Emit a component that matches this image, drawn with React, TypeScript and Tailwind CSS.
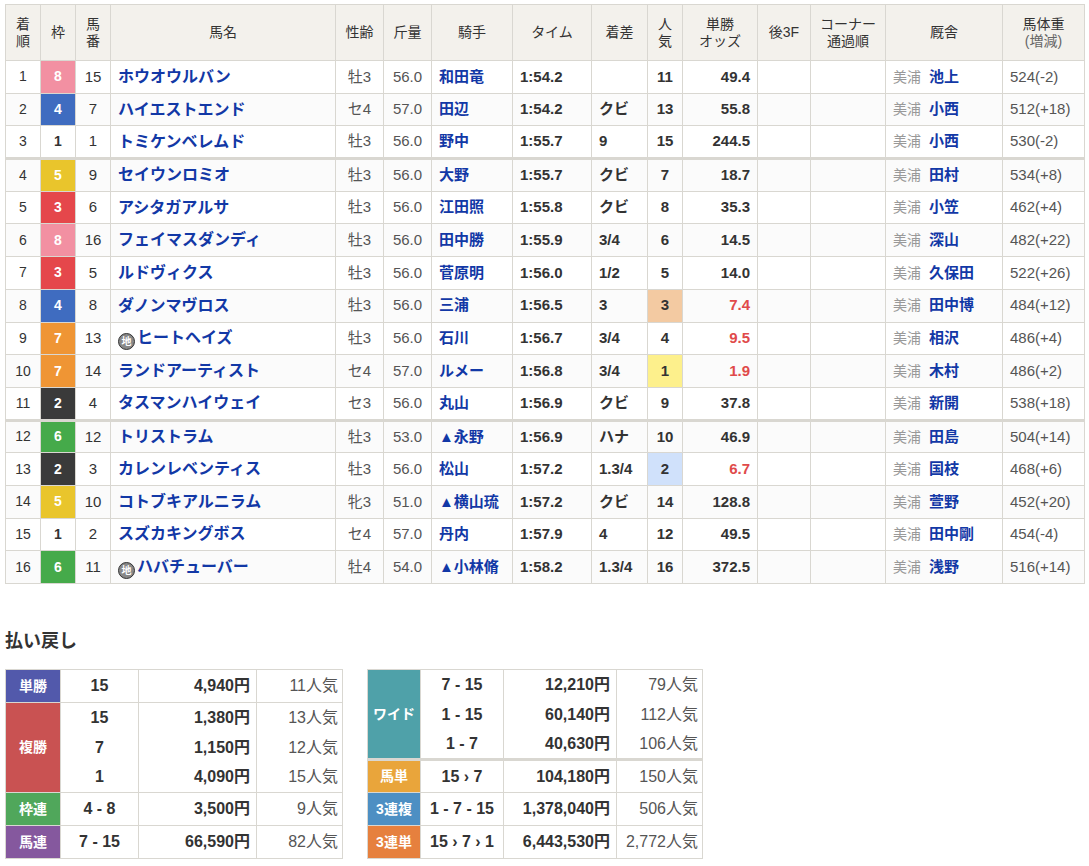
import React from "react";

const F = { fontFamily: '"Liberation Sans","Noto Sans CJK JP",sans-serif' };
const waku: Record<number, string> = {
  1: "bg-white text-[#333]",
  2: "bg-[#3a3a3a] text-white",
  3: "bg-[#e5474b] text-white",
  4: "bg-[#3f6cc0] text-white",
  5: "bg-[#e9c52c] text-white",
  6: "bg-[#45aa4a] text-white",
  7: "bg-[#ef9534] text-white",
  8: "bg-[#f290a2] text-white",
};
type R = [number, number, number, string, boolean, string, string, string, string, string, number, string, string, string];
const rows: R[] = [
  [1, 8, 15, "ホウオウルバン", false, "牡3", "56.0", "和田竜", "1:54.2", "", 11, "49.4", "池上", "524(-2)"],
  [2, 4, 7, "ハイエストエンド", false, "セ4", "57.0", "田辺", "1:54.2", "クビ", 13, "55.8", "小西", "512(+18)"],
  [3, 1, 1, "トミケンベレムド", false, "牡3", "56.0", "野中", "1:55.7", "9", 15, "244.5", "小西", "530(-2)"],
  [4, 5, 9, "セイウンロミオ", false, "牡3", "56.0", "大野", "1:55.7", "クビ", 7, "18.7", "田村", "534(+8)"],
  [5, 3, 6, "アシタガアルサ", false, "牡3", "56.0", "江田照", "1:55.8", "クビ", 8, "35.3", "小笠", "462(+4)"],
  [6, 8, 16, "フェイマスダンディ", false, "牡3", "56.0", "田中勝", "1:55.9", "3/4", 6, "14.5", "深山", "482(+22)"],
  [7, 3, 5, "ルドヴィクス", false, "牡3", "56.0", "菅原明", "1:56.0", "1/2", 5, "14.0", "久保田", "522(+26)"],
  [8, 4, 8, "ダノンマヴロス", false, "牡3", "56.0", "三浦", "1:56.5", "3", 3, "7.4", "田中博", "484(+12)"],
  [9, 7, 13, "ヒートヘイズ", true, "牡3", "56.0", "石川", "1:56.7", "3/4", 4, "9.5", "相沢", "486(+4)"],
  [10, 7, 14, "ランドアーティスト", false, "セ4", "57.0", "ルメー", "1:56.8", "3/4", 1, "1.9", "木村", "486(+2)"],
  [11, 2, 4, "タスマンハイウェイ", false, "セ3", "56.0", "丸山", "1:56.9", "クビ", 9, "37.8", "新開", "538(+18)"],
  [12, 6, 12, "トリストラム", false, "牡3", "53.0", "▲永野", "1:56.9", "ハナ", 10, "46.9", "田島", "504(+14)"],
  [13, 2, 3, "カレンレベンティス", false, "牡3", "56.0", "松山", "1:57.2", "1.3/4", 2, "6.7", "国枝", "468(+6)"],
  [14, 5, 10, "コトブキアルニラム", false, "牝3", "51.0", "▲横山琉", "1:57.2", "クビ", 14, "128.8", "萱野", "452(+20)"],
  [15, 1, 2, "スズカキングボス", false, "セ4", "57.0", "丹内", "1:57.9", "4", 12, "49.5", "田中剛", "454(-4)"],
  [16, 6, 11, "ハバチューバー", true, "牡4", "54.0", "▲小林脩", "1:58.2", "1.3/4", 16, "372.5", "浅野", "516(+14)"],
];
const popBg: Record<number, string> = { 1: "bg-[#fdf08c]", 2: "bg-[#d0e1fb]", 3: "bg-[#f3caa2]" };
const widths = [35, 35, 35, 225, 48, 48, 81, 79, 56, 35, 75, 53, 75, 117, 82];
const B = "border border-[#d9d7d1]";

function Chi() {
  return (
    <span className="inline-flex items-center justify-center w-[17px] h-[17px] rounded-full bg-[#888] border-[1.5px] border-[#333] text-white text-[10px] font-bold mr-[2px] align-[-2px]">地</span>
  );
}

export default function App() {
  const th = `${B} bg-[#f3f1ec] font-normal text-[#333] text-[14px] leading-[17px]`;
  return (
    <div style={F} className="bg-white w-[1089px] h-[866px] text-[#333] text-[15px] pt-[4px] pl-[5px]">
      <table className="border-collapse table-fixed" style={{ width: 1079 }}>
        <colgroup>{widths.map((w, i) => <col key={i} style={{ width: w }} />)}</colgroup>
        <thead>
          <tr className="h-[56px]">
            <th className={th}>着<br />順</th>
            <th className={th}>枠</th>
            <th className={th}>馬<br />番</th>
            <th className={th}>馬名</th>
            <th className={th}>性齢</th>
            <th className={th}>斤量</th>
            <th className={th}>騎手</th>
            <th className={th}>タイム</th>
            <th className={th}>着差</th>
            <th className={th}>人<br />気</th>
            <th className={th}>単勝<br />オッズ</th>
            <th className={th}>後3F</th>
            <th className={th}>コーナー<br />通過順</th>
            <th className={th}>厩舎</th>
            <th className={th}>馬体重<br /><span className="text-[#666]">(増減)</span></th>
          </tr>
        </thead>
        <tbody>
          {rows.map((r) => {
            const thick = r[0] === 4 || r[0] === 12 ? "border-t-[3px]" : "";
            const td = `${B} ${thick}`;
            return (
              <tr key={r[0]} className={`h-[32.7px] ${r[0] % 2 === 0 ? "bg-[#fbfbfb]" : "bg-white"}`}>
                <td className={`${td} text-center text-[14px]`}>{r[0]}</td>
                <td className={`${td} text-center font-bold text-[14px] ${waku[r[1]]}`}>{r[1]}</td>
                <td className={`${td} text-center`}>{r[2]}</td>
                <td className={`${td} px-[7px] font-bold text-[#1238a6] text-[16px]`}>{r[4] && <Chi />}{r[3]}</td>
                <td className={`${td} text-center text-[#555]`}>{r[5]}</td>
                <td className={`${td} text-center text-[#555]`}>{r[6]}</td>
                <td className={`${td} px-[7px] font-bold text-[#1238a6]`}>{r[7]}</td>
                <td className={`${td} px-[7px] font-bold`}>{r[8]}</td>
                <td className={`${td} px-[7px] font-bold`}>{r[9]}</td>
                <td className={`${td} text-center font-bold ${popBg[r[10]] ?? ""}`}>{r[10]}</td>
                <td className={`${td} text-right pr-[7px] font-bold ${parseFloat(r[11]) < 10 ? "text-[#e04a4a]" : ""}`}>{r[11]}</td>
                <td className={td}></td>
                <td className={td}></td>
                <td className={`${td} px-[7px]`}><span className="text-[#999] mr-[8px] text-[14px]">美浦</span><span className="font-bold text-[#1238a6]">{r[12]}</span></td>
                <td className={`${td} px-[7px] text-[#555]`}>{r[13]}</td>
              </tr>
            );
          })}
        </tbody>
      </table>

      <div className="mt-[44px] text-[18px] font-bold text-[#333]">払い戻し</div>

      <div className="flex gap-[24px] mt-[14px] items-start">
        <Pay
          w={[55, 78, 118, 86]}
          groups={[
            { label: "単勝", c: "bg-[#5259ab]", rows: [["15", "4,940円", "11人気"]] },
            { label: "複勝", c: "bg-[#c95252]", rows: [["15", "1,380円", "13人気"], ["7", "1,150円", "12人気"], ["1", "4,090円", "15人気"]] },
            { label: "枠連", c: "bg-[#50a75b]", rows: [["4 - 8", "3,500円", "9人気"]] },
            { label: "馬連", c: "bg-[#85589e]", rows: [["7 - 15", "66,590円", "82人気"]] },
          ]}
        />
        <Pay
          w={[53, 83, 113, 86]}
          thickAfterFirst
          groups={[
            { label: "ワイド", c: "bg-[#4fa1a9]", rows: [["7 - 15", "12,210円", "79人気"], ["1 - 15", "60,140円", "112人気"], ["1 - 7", "40,630円", "106人気"]] },
            { label: "馬単", c: "bg-[#e9a53b]", rows: [["15 › 7", "104,180円", "150人気"]] },
            { label: "3連複", c: "bg-[#4d8fc3]", rows: [["1 - 7 - 15", "1,378,040円", "506人気"]] },
            { label: "3連単", c: "bg-[#e6803e]", rows: [["15 › 7 › 1", "6,443,530円", "2,772人気"]] },
          ]}
        />
      </div>
    </div>
  );
}

function Pay({ w, groups, thickAfterFirst }: { w: number[]; groups: { label: string; c: string; rows: string[][] }[]; thickAfterFirst?: boolean }) {
  const total = w.reduce((a, b) => a + b, 0);
  return (
    <table className="border-collapse table-fixed" style={{ width: total }}>
      <colgroup>{w.map((x, i) => <col key={i} style={{ width: x }} />)}</colgroup>
      <tbody>
        {groups.map((g, gi) =>
          g.rows.map((r, ri) => {
            const multi = g.rows.length > 1;
            const topThick = thickAfterFirst && gi === 1 && ri === 0 ? "border-t-[3px]" : "";
            const h = multi ? "h-[30px]" : "h-[33px]";
            const vb = multi ? (ri === 0 ? "border-b-0" : ri === g.rows.length - 1 ? "border-t-0" : "border-y-0") : "";
            return (
              <tr key={gi + "-" + ri} className={h}>
                {ri === 0 && (
                  <td rowSpan={g.rows.length} className={`border border-[#d9d7d1] ${topThick} ${g.c} text-white font-bold text-center text-[14px]`}>{g.label}</td>
                )}
                <td className={`border border-[#d9d7d1] ${topThick} ${vb} text-center font-bold text-[16px]`}>{r[0]}</td>
                <td className={`border border-[#d9d7d1] ${topThick} ${vb} text-right pr-[6px] font-bold text-[16px]`}>{r[1]}</td>
                <td className={`border border-[#d9d7d1] ${topThick} ${vb} text-right pr-[4px] text-[#555] text-[16px]`}>{r[2]}</td>
              </tr>
            );
          })
        )}
      </tbody>
    </table>
  );
}
